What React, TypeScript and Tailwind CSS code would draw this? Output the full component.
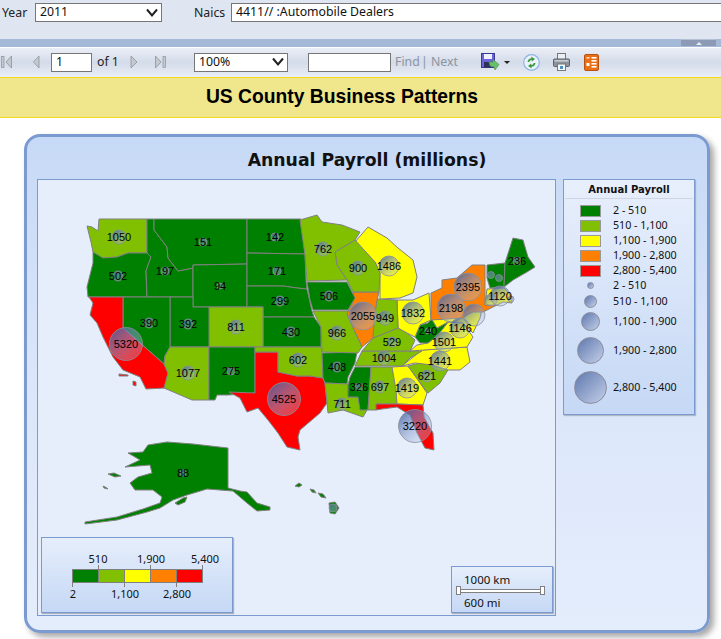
import React from "react";

const G = "#008000", L = "#80c000", Y = "#ffff00", O = "#ff8000", R = "#ff0000";

const states: [string, string][] = [
  [L, "87,226 92,227 98,231 99,219 147,219 147,253 128,253 117,257 103,258 93,252 91,242"],
  [G, "93,252 103,258 117,257 128,253 147,253 151,257 146,271 147,297 88,297 87,287 93,263"],
  [G, "147,219 154,219 154,230 167,247 168,258 178,271 193,268 193,297 147,297 146,271 151,257 147,253"],
  [G, "154,219 247,219 247,264 193,265 193,268 178,271 168,258 167,247 154,230"],
  [G, "193,265 247,264 247,307 193,307"],
  [G, "247,219 301,219 305,254 247,253"],
  [G, "247,253 305,254 306,280 307,289 297,288 283,286 247,286"],
  [G, "247,286 283,286 297,288 307,289 312,311 314,317 263,317 263,307 247,307"],
  [G, "263,317 314,317 321,327 321,347 263,347"],
  [L, "209,307 263,307 263,347 209,347"],
  [G, "170,297 193,297 193,307 209,307 209,347 170,347"],
  [G, "123,297 170,297 170,347 165,356 164,364 123,328"],
  [R, "89,297 123,297 123,328 164,364 168,373 165,388 146,389 140,377 123,370 113,357 103,337 97,323 90,315 93,303"],
  [L, "170,347 209,347 209,400 192,400 164,388 168,373 164,364 165,356"],
  [G, "209,347 255,347 255,393 228,395 217,395 215,400 209,400"],
  [R, "255,352 278,352 278,372 297,376 310,376 323,378 325,383 327,403 320,413 300,430 298,437 300,450 287,447 278,433 268,420 258,408 247,412 240,398 229,392 255,393"],
  [L, "255,347 321,347 322,353 323,378 310,376 297,376 278,372 278,352 255,352"],
  [G, "322,353 357,352 355,363 348,377 347,384 325,383 323,378"],
  [L, "325,383 348,384 348,397 358,397 360,397 367,410 363,417 343,410 328,413 327,403"],
  [G, "355,367 371,367 368,410 360,410 358,397 348,397 348,385 350,377"],
  [L, "371,367 392,367 397,390 397,404 376,404 376,410 368,410"],
  [Y, "392,367 408,366 427,393 423,405 397,404 396,390"],
  [R, "376,404 397,404 423,405 424,417 433,433 434,450 425,448 417,433 410,415 397,407 382,409 376,410"],
  [L, "408,366 420,363 432,365 448,370 440,383 428,393"],
  [Y, "402,366 422,350 467,347 470,362 460,370 448,370 432,365 415,363"],
  [L, "355,366 362,351 422,351 410,358 402,366"],
  [L, "362,351 373,338 398,328 407,333 415,340 410,351"],
  [Y, "410,351 417,345 428,343 438,335 448,322 463,323 473,337 467,347"],
  [G, "415,337 420,325 428,323 433,317 437,328 448,322 438,335 428,343 420,343"],
  [Y, "397,300 413,300 429,293 431,320 420,325 415,337 407,333 398,328"],
  [L, "377,299 397,300 398,328 373,338 374,320"],
  [O, "353,292 379,292 377,300 374,320 373,338 362,347 355,332 347,313 353,303"],
  [Y, "355,242 368,227 387,238 398,248 413,260 417,277 413,293 400,298 380,299 380,273 375,262"],
  [L, "335,252 355,240 375,262 380,273 379,292 353,292 347,280 337,265"],
  [L, "300,220 317,215 322,222 342,225 360,232 355,240 335,252 337,265 347,280 307,281 305,255"],
  [G, "307,282 347,282 355,298 348,310 313,310 310,300"],
  [L, "313,311 348,311 347,315 355,332 362,347 358,353 322,352 321,327"],
  [Y, "431,318 463,318 467,315 473,310 482,308 480,318 473,333 463,323 448,322 437,328"],
  [O, "431,293 442,288 442,280 457,278 472,265 485,265 485,305 497,305 483,312 473,312 467,315 463,318 431,320"],
  [G, "487,265 505,263 504,287 490,288 487,278"],
  [G, "505,263 513,238 523,240 528,257 535,267 527,272 513,280 504,287"],
  [Y, "487,289 504,288 512,297 512,303 503,302 497,305 485,305"],
  [G, "128,453 143,452 148,445 167,442 193,444 228,448 228,488 240,491 247,492 257,503 270,507 270,510 257,511 247,503 233,491 207,489 187,495 173,500 160,508 147,512 117,520 85,524 85,522 117,517 143,509 160,503 162,497 153,490 135,490 130,483 138,477 152,473 150,465 125,467 140,460 135,457"],
  [G, "108,474 114,473 121,476 115,477"],
  [G, "175,503 183,498 187,497 185,502 178,505"],
  [G, "103,486 107,488 108,489 104,488"],
  [G, "295,486 299,483 302,485 299,487"],
  [G, "310,489 314,490 316,493 312,492"],
  [G, "318,493 323,494 326,498 321,497"],
  [G, "329,503 335,502 339,508 335,514 330,513"],
  [R, "119,374 128,375 128,376 119,376"],
  [R, "133,381 136,382 136,386 133,385"],
];

const bubbles: [string, number, number, number][] = [
  ["1050", 119, 237, 7], ["151", 203, 242, 4], ["142", 275, 237, 4], ["502", 118, 276, 5],
  ["197", 165, 271, 4], ["171", 277, 271, 4], ["94", 220, 286, 3], ["299", 280, 301, 5],
  ["390", 149, 323, 5], ["392", 188, 324, 5], ["811", 236, 327, 7], ["430", 291, 332, 5],
  ["5320", 126, 344, 16.5], ["602", 298, 360, 7], ["275", 231, 371, 4], ["1077", 188, 373, 7],
  ["4525", 284, 399, 16.5], ["762", 323, 249, 7], ["900", 358, 268, 7], ["1486", 389, 266, 10],
  ["506", 329, 296, 5], ["2055", 363, 316, 14], ["949", 385, 318, 7], ["1832", 413, 313, 11],
  ["966", 337, 333, 7], ["240", 428, 331, 3], ["2198", 451, 308, 14], ["2395", 468, 287, 14],
  ["1146", 460, 328, 10], ["", 474, 315, 11], ["", 491, 300, 6], ["1120", 500, 296, 10],
  ["", 491, 275, 3.5], ["", 499, 278, 3.5], ["", 511, 299, 3], ["236", 517, 261, 4],
  ["1501", 444, 342, 10], ["529", 392, 342, 5], ["1004", 384, 358, 7], ["1441", 440, 361, 10],
  ["408", 337, 367, 5], ["621", 427, 376, 6], ["326", 359, 387, 4], ["697", 380, 387, 6],
  ["1419", 407, 388, 10], ["711", 342, 404, 6], ["3220", 415, 426, 16.5], ["88", 183, 473, 3],
  ["", 333, 508, 4],
];

const UsMap = () => (
  <svg width="517" height="435" viewBox="38 180 517 435" className="block">
    <defs>
      <linearGradient id="bub" x1="0.15" y1="0.1" x2="0.85" y2="0.9">
        <stop offset="0" stopColor="#4d68a8" stopOpacity="0.8" />
        <stop offset="1" stopColor="#b8c8e8" stopOpacity="0.3" />
      </linearGradient>
    </defs>
    {states.map(([c, p], i) => (
      <polygon key={i} points={p} fill={c} stroke="#808080" strokeWidth="1" strokeLinejoin="round" />
    ))}
    {bubbles.map(([, x, y, r], i) => (
      <circle key={i} cx={x} cy={y} r={r} fill="url(#bub)" stroke="#8a8f9c" strokeOpacity="0.8" />
    ))}
    {bubbles.map(([t, x, y], i) =>
      t ? (
        <text key={i} x={x} y={y + 4} textAnchor="middle" fontSize="11" fill="#000" fontFamily="'Liberation Sans', sans-serif">
          {t}
        </text>
      ) : null
    )}
  </svg>
);

const Chevron = () => (
  <svg width="14" height="10" viewBox="0 0 14 10" className="shrink-0">
    <path d="M2 1.5 L7 7.5 L12 1.5" fill="none" stroke="#222" strokeWidth="2" />
  </svg>
);

const Field = ({ text, cls, chevron }: { text: string; cls: string; chevron?: boolean }) => (
  <div className={"flex items-center justify-between h-[19px] bg-white border border-[#767676] pl-1 pr-[2px] text-[#111] " + cls}>
    <span>{text}</span>
    {chevron && <Chevron />}
  </div>
);

const Tri = ({ dir, bar }: { dir: "l" | "r"; bar?: boolean }) => (
  <svg width="11" height="14" viewBox="0 0 11 14" className="shrink-0">
    {dir === "l" ? (
      <>
        {bar && <rect x="0.5" y="1.5" width="2.5" height="11" fill="#c4c8cf" stroke="#8f939b" strokeWidth="0.7" />}
        <path d={bar ? "M10.5 1 L5 7 L10.5 13 Z" : "M7 1 L1.5 7 L7 13 Z"} fill="#c4c8cf" stroke="#8f939b" strokeWidth="0.8" />
      </>
    ) : (
      <>
        {bar && <rect x="8" y="1.5" width="2.5" height="11" fill="#c4c8cf" stroke="#8f939b" strokeWidth="0.7" />}
        <path d={bar ? "M0.5 1 L6 7 L0.5 13 Z" : "M1 1 L7 7 L1 13 Z"} fill="#c4c8cf" stroke="#8f939b" strokeWidth="0.8" />
      </>
    )}
  </svg>
);

const SaveIcon = () => (
  <svg width="19" height="19" viewBox="0 0 19 19" className="shrink-0">
    <rect x="0.5" y="0.5" width="13" height="14" fill="#6a64d8" stroke="#3a3a90" />
    <rect x="3" y="1" width="8" height="5" fill="#eef0fa" />
    <rect x="3" y="9" width="7" height="5.5" fill="#30305a" />
    <path d="M8 9 L12 9 L12 6.5 L18 11.5 L14 17 L13 14 L9 13 Z" fill="#68c068" stroke="#3f8f4f" strokeWidth="0.6" />
  </svg>
);

const RefreshIcon = () => (
  <svg width="17" height="17" viewBox="0 0 17 17" className="shrink-0">
    <circle cx="8.5" cy="8.5" r="7.8" fill="#eaf2fb" stroke="#8fb4e2" strokeWidth="1.2" />
    <path d="M4.5 8 Q5 4.5 8.5 4.2 L8.2 2.5 L12 5 L8.8 7.5 L8.6 6 Q6.6 6.2 6.3 8 Z" fill="#3f9a3f" />
    <path d="M12.5 9 Q12 12.5 8.5 12.8 L8.8 14.5 L5 12 L8.2 9.5 L8.4 11 Q10.4 10.8 10.7 9 Z" fill="#3f9a3f" />
  </svg>
);

const PrintIcon = () => (
  <svg width="17" height="18" viewBox="0 0 17 18" className="shrink-0">
    <rect x="4.5" y="0.5" width="8" height="6" fill="#eceef2" stroke="#777" />
    <rect x="0.5" y="6" width="16" height="7.5" rx="1" fill="#8b929c" stroke="#5d636c" />
    <rect x="1.5" y="7" width="14" height="1.6" fill="#c8ccd2" />
    <rect x="4.5" y="11" width="8" height="6.5" fill="#f6f7f9" stroke="#777" />
    <rect x="7" y="13" width="3" height="3" fill="#4a90c8" />
  </svg>
);

const ExportIcon = () => (
  <svg width="15" height="17" viewBox="0 0 15 17" className="shrink-0">
    <rect x="0.5" y="0.5" width="14" height="16" rx="1.5" fill="#ea7018" stroke="#b9520f" />
    <rect x="7.5" y="3" width="5" height="1.6" fill="#fff" />
    <rect x="7.5" y="6" width="5" height="1.6" fill="#fff" />
    <rect x="7.5" y="9" width="5" height="1.6" fill="#fff" />
    <rect x="7.5" y="12" width="5" height="1.6" fill="#fff" />
    <rect x="2.5" y="3" width="3" height="1.6" fill="#ffd9b8" />
    <rect x="2.5" y="9" width="3" height="3" fill="#fff" />
  </svg>
);

const swatches: [string, string][] = [
  [G, "2 - 510"], [L, "510 - 1,100"], [Y, "1,100 - 1,900"], [O, "1,900 - 2,800"], [R, "2,800 - 5,400"],
];
const sized: [string, string, string][] = [
  ["2 - 510", "h-[14px]", "w-[7px] h-[7px]"],
  ["510 - 1,100", "h-[18px]", "w-[13px] h-[13px]"],
  ["1,100 - 1,900", "h-[22px]", "w-[19px] h-[19px]"],
  ["1,900 - 2,800", "h-[36px]", "w-[27px] h-[27px]"],
  ["2,800 - 5,400", "h-[38px]", "w-[33px] h-[33px]"],
];

const ColorScale = () => (
  <svg width="191" height="75" viewBox="41 538 191 75" className="block">
    {[G, L, Y, O, R].map((c, i) => (
      <rect key={c} x={71.5 + i * 26} y="569.5" width="26" height="13" fill={c} stroke="#808080" />
    ))}
    {[97.5, 149.5, 201.5].map((x) => (
      <line key={x} x1={x} x2={x} y1="565" y2="569" stroke="#808080" />
    ))}
    {[71.5, 123.5, 175.5].map((x) => (
      <line key={x} x1={x} x2={x} y1="583" y2="587" stroke="#808080" />
    ))}
    {[["510", 97, 563], ["1,900", 150, 563], ["5,400", 204, 563], ["2", 72, 598], ["1,100", 124, 598], ["2,800", 176, 598]].map(([t, x, y]) => (
      <text key={t as string} x={x as number} y={y as number} textAnchor="middle" fontSize="11" fill="#111" fontFamily="'Noto Sans', sans-serif">
        {t}
      </text>
    ))}
  </svg>
);

export default function App() {
  return (
    <div className="w-[721px] h-[639px] overflow-hidden bg-white flex flex-col font-['Noto_Sans',sans-serif] text-[12.3px] text-[#111]">
      <div className="h-[39px] bg-[#dfe6f1] flex items-start pt-[3px] pl-[2px] shrink-0">
        <span className="w-[33px] h-[19px] leading-[19px] text-[#222]">Year</span>
        <Field text="2011" cls="w-[127px]" chevron />
        <span className="ml-[32px] w-[37px] h-[19px] leading-[19px] text-[#222]">Naics</span>
        <Field text="4411// :Automobile Dealers" cls="flex-1 border-r-0" />
      </div>
      <div className="h-[8px] bg-[#a4b8d8] flex justify-end pr-[5px] shrink-0">
        <div className="w-[35px] h-[7px] bg-[#8d9ab5] border-t border-[#b5c0d4] flex items-center justify-center">
          <div className="w-0 h-0 border-x-[3px] border-x-transparent border-b-[3px] border-b-[#e8ecf5]" />
        </div>
      </div>
      <div className="h-[30px] shrink-0 border-t border-white bg-linear-to-b from-[#eaeef6] via-[#d4dcea] to-[#eaeef6] flex items-center pl-[1px] pb-[1px]">
        <Tri dir="l" bar />
        <div className="ml-[20px]"><Tri dir="l" /></div>
        <div className="ml-[8px]"><Field text="1" cls="w-[41px]" /></div>
        <span className="ml-[5px] text-[#222] w-[28px]">of 1</span>
        <div className="ml-[5px]"><Tri dir="r" /></div>
        <div className="ml-[14px]"><Tri dir="r" bar /></div>
        <div className="ml-[28px]"><Field text="100%" cls="w-[94px]" chevron /></div>
        <div className="ml-[20px]"><Field text="" cls="w-[83px]" /></div>
        <span className="ml-[4px] text-[#8c94a0] w-[26px]">Find</span>
        <span className="text-[#8c94a0] w-[10px]">|</span>
        <span className="text-[#8c94a0] w-[50px]">Next</span>
        <SaveIcon />
        <div className="ml-[4px] w-0 h-0 border-x-[3px] border-x-transparent border-t-[3px] border-t-[#222]" />
        <div className="ml-[13px]"><RefreshIcon /></div>
        <div className="ml-[13px]"><PrintIcon /></div>
        <div className="ml-[14px]"><ExportIcon /></div>
      </div>
      <div className="h-[41px] shrink-0 bg-[#f0e68c] border-y border-[#f5d820] flex items-center justify-center pr-[37px] font-['Liberation_Sans',sans-serif] font-bold text-[19.3px] text-black">
        US County Business Patterns
      </div>
      <div className="ml-[24px] mt-[16px] w-[686px] h-[499px] shrink-0 rounded-[16px] border-[3px] border-[#7b9bd0] bg-linear-to-b from-[#c6d9f6] via-[#dbe6fa] to-[#e4edfc] shadow-[4px_4px_6px_rgba(0,0,0,0.35)] px-[10px] flex flex-col">
        <div className="h-[42px] shrink-0 flex items-center justify-center pt-[6px] font-['DejaVu_Sans',sans-serif] font-bold text-[17.3px] text-[#111]">
          Annual Payroll (millions)
        </div>
        <div className="flex items-start gap-[7px]">
          <div className="relative w-[519px] h-[437px] border border-[#7b9bd0] bg-[#e6eefb] shrink-0">
            <UsMap />
            <div className="absolute left-[3px] bottom-[2px] w-[192px] h-[76px] border border-[#7b9bd0] shadow-[1px_1px_1px_rgba(0,0,0,0.25)] bg-linear-to-b from-[#e6eefb] to-[#c5d8f5]">
              <ColorScale />
            </div>
            <div className="absolute right-[2px] bottom-[2px] w-[102px] h-[47px] border border-[#7b9bd0] shadow-[1px_1px_1px_rgba(0,0,0,0.25)] bg-linear-to-b from-[#e6eefb] to-[#c5d8f5] flex flex-col pl-[4px] pt-[7px] text-[11.5px] leading-[12px]">
              <span className="pl-[8px]">1000 km</span>
              <div className="w-[89px] h-[9px] flex items-center">
                <div className="w-[5px] h-[9px] bg-white border border-[#808080]" />
                <div className="flex-1 h-[4px] bg-white border-y border-[#808080]" />
                <div className="w-[5px] h-[9px] bg-white border border-[#808080]" />
              </div>
              <span className="pl-[8px] mt-[2px]">600 mi</span>
            </div>
          </div>
          <div className="w-[132px] h-[236px] shrink-0 border border-[#7b9bd0] bg-linear-to-b from-[#e8effc] to-[#c5d8f5] shadow-[1px_1px_1px_rgba(0,0,0,0.2)] flex flex-col">
            <div className="h-[19px] mx-[1px] flex items-center justify-center font-['DejaVu_Sans',sans-serif] font-bold text-[10px] border-b border-[#cfd6e2]">
              Annual Payroll
            </div>
            <div className="h-[4px]" />
            {swatches.map(([c, t]) => (
              <div key={c} className="h-[15px] flex items-center shrink-0">
                <div className="ml-[16px] w-[21px] h-[12px] border border-[#999]" style={{ backgroundColor: c }} />
                <span className="ml-[12px] text-[10.7px]">{t}</span>
              </div>
            ))}
            {sized.map(([t, h, s]) => (
              <div key={t} className={"flex items-center shrink-0 " + h}>
                <div className="w-[53px] flex justify-center">
                  <div className={"rounded-full border border-[#8c8c9a] bg-linear-to-br from-[#6078ac] to-[#c4d0ea] " + s} />
                </div>
                <span className="-ml-[4px] text-[10.7px]">{t}</span>
              </div>
            ))}
          </div>
        </div>
      </div>
    </div>
  );
}
